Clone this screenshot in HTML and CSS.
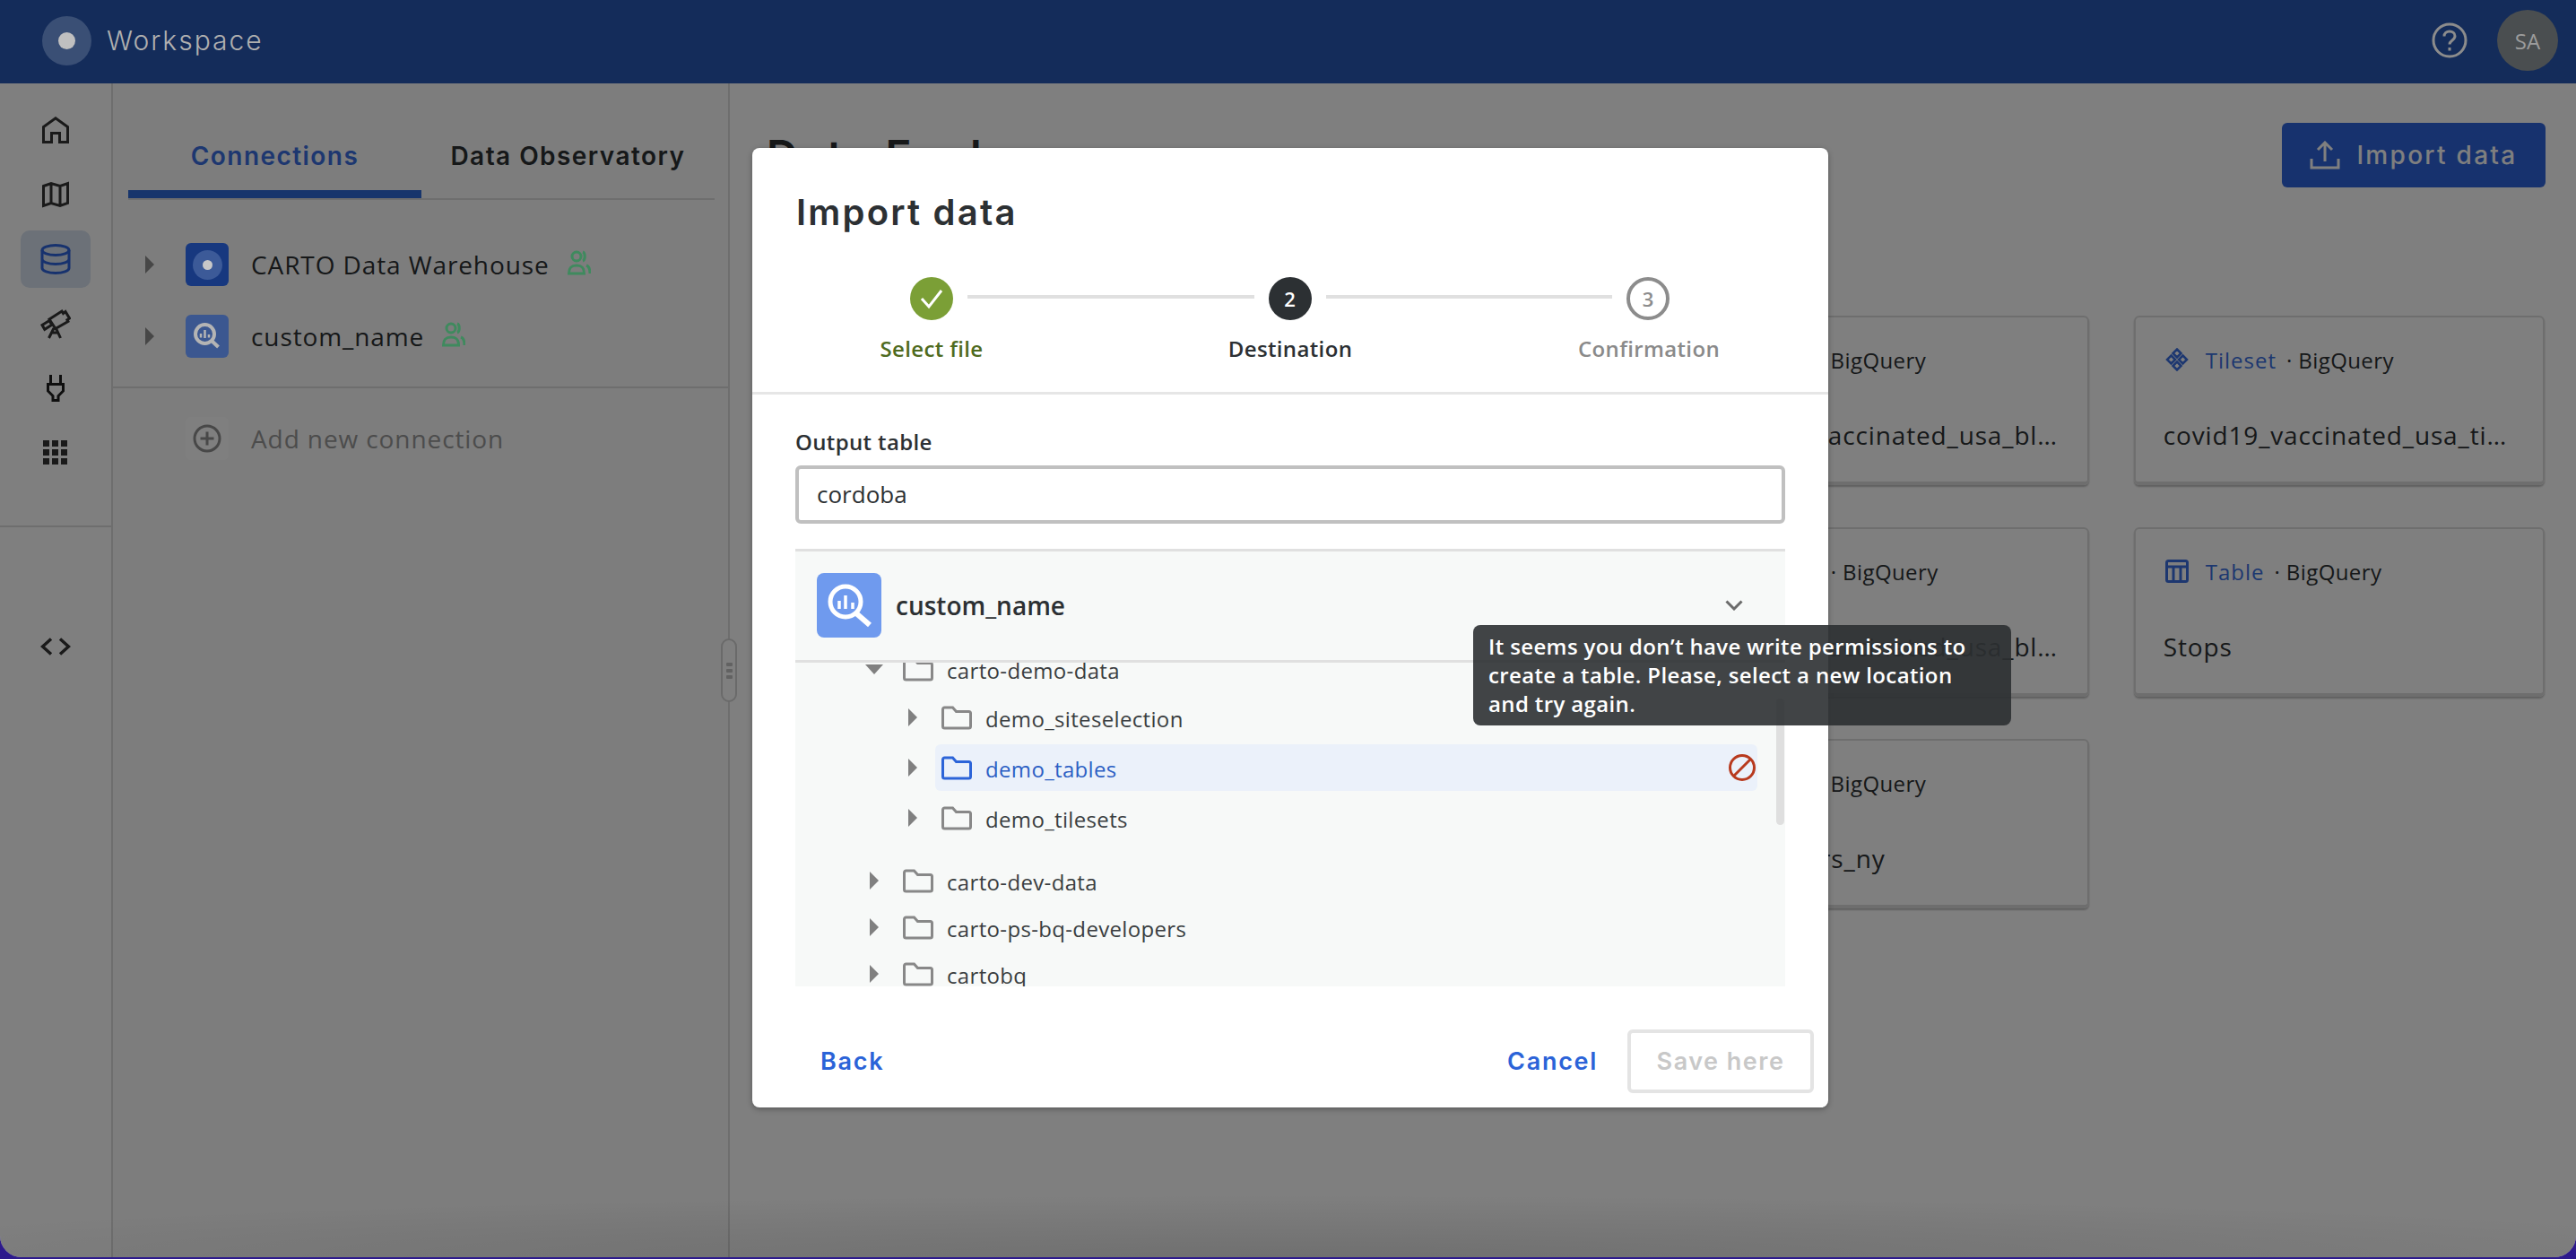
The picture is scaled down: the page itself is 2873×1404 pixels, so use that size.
FILE: index.html
```html
<!DOCTYPE html>
<html lang="en">
<head>
    <meta charset="UTF-8">
    <title>Workspace - Data Explorer</title>
    <link rel="stylesheet" href="styles.css">
</head>
<body>
<div class="app">

    <header class="topbar">
        <div class="logo"><span class="logo-dot"></span></div>
        <span class="brand">Workspace</span>
        <svg class="help" viewBox="0 0 40 40" fill="none" stroke="#8c8c8c" stroke-width="3">
            <circle cx="20" cy="20" r="18"/>
            <path d="M14 15.500c0-3.500 2.700-5.500 6-5.500s6 2 6 5.200c0 4.800-6 4.800-6 9.300"/>
            <path d="M20 28v3.500"/>
        </svg>
        <div class="avatar">SA</div>
    </header>

    <div class="workspace">
        <nav class="rail">
            <a class="rail-item">
                <svg width="30" height="30" viewBox="0 0 30 30" fill="none" stroke="#343434" stroke-width="3"><path d="M1.500 28.500V11.500L15 1.800l13.500 9.700v17h-9V18.500h-9v10z"/></svg>
            </a>
            <a class="rail-item">
                <svg width="30" height="30" viewBox="0 0 30 30" fill="none" stroke="#343434" stroke-width="3"><path d="M1.500 5.500 10 2.500l10 3 8.500-3v22l-8.500 3-10-3-8.500 3zM10 2.500v22M20 5.500v22"/></svg>
            </a>
            <a class="rail-item active">
                <svg width="34" height="34" viewBox="0 0 34 34" fill="none" stroke="#2e64dc" stroke-width="3"><ellipse cx="17" cy="7" rx="15" ry="5.500"/><path d="M2 7v20c0 3 6.700 5.500 15 5.500S32 30 32 27V7M2 17c0 3 6.700 5.500 15 5.500S32 20 32 17"/></svg>
            </a>
            <a class="rail-item">
                <svg width="34" height="34" viewBox="0 0 34 34" fill="none" stroke="#343434" stroke-width="3"><path d="m10 12 14-9 1.500 2.500 2.500-2 4.500 7.500-2.600 1.800 1 1.700-14 8zM2 18.500l8-5 2.800 4.800-8 5zM15 22l-5.500 11M17 21l5.500 12M12 27h8"/></svg>
            </a>
            <a class="rail-item">
                <svg width="20" height="30" viewBox="0 0 20 30" fill="none" stroke="#1e1e1e" stroke-width="3"><path d="M4.500 0v10M15.500 0v10M1.500 10.500h17V18l-5.500 5.500v5H7v-5L1.500 18z"/></svg>
            </a>
            <a class="rail-item">
                <svg width="28" height="28" viewBox="0 0 28 28" fill="#343434">
                    <rect x="0" y="0" width="7" height="7"/><rect x="10" y="0" width="7" height="7"/><rect x="20" y="0" width="7" height="7"/>
                    <rect x="0" y="10" width="7" height="7"/><rect x="10" y="10" width="7" height="7"/><rect x="20" y="10" width="7" height="7"/>
                    <rect x="0" y="20" width="7" height="7"/><rect x="10" y="20" width="7" height="7"/><rect x="20" y="20" width="7" height="7"/>
                </svg>
            </a>
            <div class="rail-divider"></div>
            <a class="rail-item">
                <svg width="34" height="20" viewBox="0 0 34 20" fill="none" stroke="#343434" stroke-width="3.500"><path d="M12 1.500 2.500 10l9.500 8.500M22 1.500l9.500 8.500-9.500 8.500"/></svg>
            </a>
        </nav>

        <aside class="sidebar">
            <div class="tabs">
                <div class="tab active">Connections</div>
                <div class="tab">Data Observatory</div>
            </div>

            <div class="connections">
                <div class="conn">
                    <span class="caret"></span>
                    <span class="conn-icon carto"><span class="carto-ring"><span class="carto-dot"></span></span></span>
                    <span class="conn-name">CARTO Data Warehouse</span>
                    <svg class="shared" viewBox="0 0 26 28" fill="none" stroke="#3f8a5e" stroke-width="3"><circle cx="10" cy="7" r="5"/><path d="M17 2c3 1 3 9 0 10M1.500 26c0-8 4-9 8.500-9s8.500 1 8.500 9zM21 17c3 1 4 4 4 9"/></svg>
                </div>
                <div class="conn">
                    <span class="caret"></span>
                    <span class="conn-icon bigquery">
                        <svg width="36" height="36" viewBox="0 0 72 72" fill="none" stroke="#b4b4b4"><circle cx="31" cy="31" r="21" stroke-width="8"/><path d="M46 46l15 14" stroke-width="8"/><path d="M22 30v9M31 22v18M40 32v7" stroke-width="5"/></svg>
                    </span>
                    <span class="conn-name">custom_name</span>
                    <svg class="shared" viewBox="0 0 26 28" fill="none" stroke="#3f8a5e" stroke-width="3"><circle cx="10" cy="7" r="5"/><path d="M17 2c3 1 3 9 0 10M1.500 26c0-8 4-9 8.500-9s8.500 1 8.500 9zM21 17c3 1 4 4 4 9"/></svg>
                </div>
            </div>

            <div class="add-conn">
                <span class="add-tile">
                    <svg width="32" height="32" viewBox="0 0 32 32" fill="none" stroke="#909090" stroke-width="3"><circle cx="16" cy="16" r="14"/><path d="M16 8.500v15M8.500 16h15"/></svg>
                </span>
                <span class="add-label">Add new connection</span>
            </div>

            <div class="handle"><span></span><span></span><span></span></div>
        </aside>

        <main class="main">
            <div class="main-head">
                <h1 class="page-title">Data Explorer</h1>
                <button class="import-btn">
                    <svg width="34" height="32" viewBox="0 0 34 32" fill="none" stroke="#fff" stroke-width="3"><path d="M17 23V3M9 10l8-8 8 8"/><path d="M2 20v10h30V20"/></svg>
                    Import data
                </button>
            </div>

            <div class="cards">
                <div class="card"></div>
                <div class="card"></div>
                <div class="card">
                    <div class="card-head">
                        <svg class="card-icon" viewBox="0 0 26 26" fill="none" stroke="#3a6fe0" stroke-width="3"><rect x="1.500" y="1.500" width="23" height="23" rx="2"/><path d="M1.500 8h23M9 8v16M17 8v16"/></svg>
                        <span class="card-type">Table</span><span class="card-source">· BigQuery</span>
                    </div>
                    <div class="card-name">covid19_vaccinated_usa_blockgroups</div>
                </div>
                <div class="card">
                    <div class="card-head">
                        <svg class="card-icon" viewBox="0 0 26 26" fill="none" stroke="#3a6fe0" stroke-width="2.500"><path d="M13 1.500l4.500 4.500-4.500 4.500L8.500 6zM6.500 8.500 11 13l-4.500 4.500L2 13zM19.500 8.500 24 13l-4.500 4.500L15 13zM13 15.500l4.500 4.500-4.500 4.500L8.500 20z"/></svg>
                        <span class="card-type">Tileset</span><span class="card-source">· BigQuery</span>
                    </div>
                    <div class="card-name">covid19_vaccinated_usa_ti…</div>
                </div>

                <div class="card"></div>
                <div class="card"></div>
                <div class="card">
                    <div class="card-head">
                        <svg class="card-icon" viewBox="0 0 26 26" fill="none" stroke="#3a6fe0" stroke-width="2.500"><path d="M13 1.500l4.500 4.500-4.500 4.500L8.500 6zM6.500 8.500 11 13l-4.500 4.500L2 13zM19.500 8.500 24 13l-4.500 4.500L15 13zM13 15.500l4.500 4.500-4.500 4.500L8.500 20z"/></svg>
                        <span class="card-type">Tileset</span><span class="card-source">· BigQuery</span>
                    </div>
                    <div class="card-name">covid19_vaccinated_usa_blockgroups</div>
                </div>
                <div class="card">
                    <div class="card-head">
                        <svg class="card-icon" viewBox="0 0 26 26" fill="none" stroke="#3a6fe0" stroke-width="3"><rect x="1.500" y="1.500" width="23" height="23" rx="2"/><path d="M1.500 8h23M9 8v16M17 8v16"/></svg>
                        <span class="card-type">Table</span><span class="card-source">· BigQuery</span>
                    </div>
                    <div class="card-name">Stops</div>
                </div>

                <div class="card"></div>
                <div class="card"></div>
                <div class="card">
                    <div class="card-head">
                        <svg class="card-icon" viewBox="0 0 26 26" fill="none" stroke="#3a6fe0" stroke-width="3"><rect x="1.500" y="1.500" width="23" height="23" rx="2"/><path d="M1.500 8h23M9 8v16M17 8v16"/></svg>
                        <span class="card-type">Table</span><span class="card-source">· BigQuery</span>
                    </div>
                    <div class="card-name">consumers_ny</div>
                </div>
            </div>
        </main>
    </div>

    <div class="scrim"></div>

    <section class="modal">
        <h2 class="modal-title">Import data</h2>

        <div class="steps">
            <span class="step-dot done">
                <svg width="28" height="24" viewBox="0 0 28 24" fill="none" stroke="#fff" stroke-width="3"><path d="M3 12l8 9L25 3"/></svg>
            </span>
            <span class="step-line"></span>
            <span class="step-dot current">2</span>
            <span class="step-line"></span>
            <span class="step-dot todo">3</span>
        </div>
        <div class="step-labels">
            <span class="label-done">Select file</span>
            <span class="label-current">Destination</span>
            <span class="label-todo">Confirmation</span>
        </div>

        <div class="modal-body">
            <label class="field-label" for="output">Output table</label>
            <input class="field-input" id="output" value="cordoba">

            <div class="picker">
                <div class="picker-head">
                    <span class="picker-icon">
                        <svg width="72" height="72" viewBox="0 0 72 72" fill="none" stroke="#fff"><circle cx="32" cy="32" r="17" stroke-width="5"/><path d="M44 45l15 13" stroke-width="6"/><path d="M25 31v9M32 25v15M40 33v7" stroke-width="3.500"/></svg>
                    </span>
                    <span class="picker-name">custom_name</span>
                    <svg class="chevron" width="20" height="12" viewBox="0 0 20 12" fill="none" stroke="#6b6b6b" stroke-width="3"><path d="M1.500 1.500 10 10l8.500-8.500"/></svg>
                </div>

                <div class="tree">
                    <div class="node root first">
                        <span class="arrow-down"></span>
                        <div class="item">
                            <svg class="folder" viewBox="0 0 34 27" fill="none" stroke="#888" stroke-width="3"><path d="M1.500 4a2 2 0 0 1 2-2h9l4 4.500h14a2 2 0 0 1 2 2V23a2 2 0 0 1-2 2h-27a2 2 0 0 1-2-2z"/></svg>
                            <span class="item-label">carto-demo-data</span>
                        </div>
                    </div>
                    <div class="node child">
                        <span class="arrow-right"></span>
                        <div class="item">
                            <svg class="folder" viewBox="0 0 34 27" fill="none" stroke="#888" stroke-width="3"><path d="M1.500 4a2 2 0 0 1 2-2h9l4 4.500h14a2 2 0 0 1 2 2V23a2 2 0 0 1-2 2h-27a2 2 0 0 1-2-2z"/></svg>
                            <span class="item-label">demo_siteselection</span>
                        </div>
                    </div>
                    <div class="node child">
                        <span class="arrow-right"></span>
                        <div class="item selected">
                            <svg class="folder" viewBox="0 0 34 27" fill="none" stroke="#2c64d8" stroke-width="3"><path d="M1.500 4a2 2 0 0 1 2-2h9l4 4.500h14a2 2 0 0 1 2 2V23a2 2 0 0 1-2 2h-27a2 2 0 0 1-2-2z"/></svg>
                            <span class="item-label">demo_tables</span>
                            <svg class="ban" width="30" height="30" viewBox="0 0 30 30" fill="none" stroke="#b83a1e" stroke-width="3"><circle cx="15" cy="15" r="13.500"/><path d="M24.500 5.500l-19 19"/></svg>
                        </div>
                    </div>
                    <div class="node child">
                        <span class="arrow-right"></span>
                        <div class="item">
                            <svg class="folder" viewBox="0 0 34 27" fill="none" stroke="#888" stroke-width="3"><path d="M1.500 4a2 2 0 0 1 2-2h9l4 4.500h14a2 2 0 0 1 2 2V23a2 2 0 0 1-2 2h-27a2 2 0 0 1-2-2z"/></svg>
                            <span class="item-label">demo_tilesets</span>
                        </div>
                    </div>
                    <div class="node root spaced">
                        <span class="arrow-right"></span>
                        <div class="item">
                            <svg class="folder" viewBox="0 0 34 27" fill="none" stroke="#888" stroke-width="3"><path d="M1.500 4a2 2 0 0 1 2-2h9l4 4.500h14a2 2 0 0 1 2 2V23a2 2 0 0 1-2 2h-27a2 2 0 0 1-2-2z"/></svg>
                            <span class="item-label">carto-dev-data</span>
                        </div>
                    </div>
                    <div class="node root">
                        <span class="arrow-right"></span>
                        <div class="item">
                            <svg class="folder" viewBox="0 0 34 27" fill="none" stroke="#888" stroke-width="3"><path d="M1.500 4a2 2 0 0 1 2-2h9l4 4.500h14a2 2 0 0 1 2 2V23a2 2 0 0 1-2 2h-27a2 2 0 0 1-2-2z"/></svg>
                            <span class="item-label">carto-ps-bq-developers</span>
                        </div>
                    </div>
                    <div class="node root">
                        <span class="arrow-right"></span>
                        <div class="item">
                            <svg class="folder" viewBox="0 0 34 27" fill="none" stroke="#888" stroke-width="3"><path d="M1.500 4a2 2 0 0 1 2-2h9l4 4.500h14a2 2 0 0 1 2 2V23a2 2 0 0 1-2 2h-27a2 2 0 0 1-2-2z"/></svg>
                            <span class="item-label">cartobq</span>
                        </div>
                    </div>
                    <div class="scroll-thumb"></div>
                </div>
            </div>
        </div>

        <footer class="modal-foot">
            <button class="text-btn">Back</button>
            <button class="text-btn cancel">Cancel</button>
            <button class="save-btn" disabled>Save here</button>
        </footer>
    </section>

    <div class="tooltip">It seems you don’t have write permissions to<br>create a table. Please, select a new location<br>and try again.</div>
</div>
</body>
</html>
```

FILE: styles.css
```css
* {
    margin: 0;
    padding: 0;
    box-sizing: border-box;
}

body {
    height: 100vh;
    overflow: hidden;
    background-color: #2d1a8c;
    font-family: 'Open Sans', sans-serif;
    color: #2c3033;
}

.app {
    position: relative;
    height: calc(100vh - 2px);
    display: flex;
    flex-direction: column;
    background-color: #fff;
    border-radius: 0 0 24px 24px;
    overflow: hidden;
}

/* Top bar sits above the scrim, its colours are the dimmed ones */
.topbar {
    position: relative;
    z-index: 2;
    flex: none;
    height: 93px;
    display: flex;
    align-items: center;
    padding: 0 20px 3px 47px;
    background-color: #142c5a;
}

.logo {
    width: 55px;
    height: 55px;
    border-radius: 50%;
    background-color: #3a4f75;
    display: flex;
    align-items: center;
    justify-content: center;
}

.logo-dot {
    width: 19px;
    height: 19px;
    border-radius: 50%;
    background-color: #c0c0c0;
}

.brand {
    margin-left: 17px;
    font-family: 'Inter', sans-serif;
    font-size: 30px;
    font-weight: 300;
    letter-spacing: 2px;
    color: #b0b0b0;
}

.help {
    width: 40px;
    height: 40px;
    margin-left: auto;
}

.avatar {
    width: 68px;
    height: 68px;
    margin-left: 33px;
    border-radius: 50%;
    background-color: #4a4e50;
    color: #9c9c9c;
    font-size: 24px;
    display: flex;
    align-items: center;
    justify-content: center;
}

.workspace {
    flex: 1;
    display: flex;
    min-height: 0;
}

/* Left rail */
.rail {
    flex: none;
    width: 126px;
    padding: 20px 23px 0;
    border-right: 2px solid #dcdcdc;
    display: flex;
    flex-direction: column;
    gap: 8px;
}

.rail-item {
    flex: none;
    width: 78px;
    height: 64px;
    border-radius: 10px;
    display: flex;
    align-items: center;
    justify-content: center;
}

.rail-item.active {
    background-color: #d8e2f0;
}

.rail-divider {
    flex: none;
    height: 2px;
    margin: 41px -23px 93px;
    background-color: #dcdcdc;
}

/* Connections panel */
.sidebar {
    position: relative;
    flex: none;
    width: 688px;
    border-right: 2px solid #dcdcdc;
    background-color: #fbfbfb;
}

.tabs {
    display: grid;
    grid-template-columns: 327px 327px;
    margin: 34px 0 0 17px;
    width: 654px;
    border-bottom: 2px solid #dcdcdc;
}

.tab {
    height: 94px;
    padding-top: 8px;
    border-bottom: 9px solid transparent;
    display: flex;
    align-items: center;
    justify-content: center;
    font-family: 'Inter', sans-serif;
    font-size: 28px;
    font-weight: 600;
    letter-spacing: 1.450px;
    color: #2c3033;
}

.tab.active {
    color: #3a6fe0;
    border-bottom-color: #2e6ad8;
}

.connections {
    padding: 48px 0 32px;
    display: flex;
    flex-direction: column;
    gap: 32px;
    border-bottom: 2px solid #dcdcdc;
}

.conn {
    height: 48px;
    padding-left: 36px;
    display: flex;
    align-items: center;
}

.caret {
    width: 0;
    height: 0;
    border-left: 10px solid #8f8f8f;
    border-top: 10px solid transparent;
    border-bottom: 10px solid transparent;
}

.conn-icon {
    position: relative;
    z-index: 2;
    width: 48px;
    height: 48px;
    margin-left: 35px;
    border-radius: 6px;
    display: flex;
    align-items: center;
    justify-content: center;
}

.conn-icon.carto {
    background-color: #17387f;
}

.conn-icon.bigquery {
    background-color: #3b5790;
}

.carto-ring {
    width: 33px;
    height: 33px;
    border-radius: 50%;
    background-color: #3c5a98;
    display: flex;
    align-items: center;
    justify-content: center;
}

.carto-dot {
    width: 11px;
    height: 11px;
    border-radius: 50%;
    background-color: #c8c8c8;
}

.conn-name {
    margin-left: 25px;
    font-size: 28px;
    letter-spacing: 0.900px;
}

.shared {
    position: relative;
    z-index: 2;
    width: 26px;
    height: 28px;
    margin: -5px 0 0 20px;
}

.add-conn {
    margin-top: 32px;
    padding-left: 81px;
    display: flex;
    align-items: center;
}

.add-tile {
    width: 48px;
    height: 48px;
    border-radius: 6px;
    background-color: #fff;
    display: flex;
    align-items: center;
    justify-content: center;
}

.add-label {
    margin-left: 25px;
    font-size: 28px;
    letter-spacing: 0.900px;
    color: #999;
}

.handle {
    position: absolute;
    top: 619px;
    right: -10px;
    width: 18px;
    height: 71px;
    border: 2px solid #d4d4d4;
    border-radius: 9px;
    background-color: #fff;
    display: flex;
    flex-direction: column;
    align-items: center;
    justify-content: center;
    gap: 3px;
}

.handle span {
    width: 7px;
    height: 4px;
    border-radius: 1px;
    background-color: #c4c4c4;
}

/* Main area, mostly under the modal */
.main {
    flex: 1;
    min-width: 0;
    padding: 44px 34px 0 41px;
}

.main-head {
    display: flex;
    align-items: center;
    justify-content: space-between;
}

.page-title {
    font-family: 'Inter', sans-serif;
    font-size: 48px;
    font-weight: 600;
    letter-spacing: 2.700px;
    color: #2c3033;
}

.import-btn {
    width: 294px;
    height: 72px;
    border: none;
    border-radius: 6px;
    background-color: #2e64dc;
    color: #fff;
    font-family: 'Inter', sans-serif;
    font-size: 28px;
    font-weight: 500;
    letter-spacing: 2.300px;
    display: flex;
    align-items: center;
    justify-content: center;
    gap: 18px;
}

.cards {
    margin-top: 143px;
    margin-right: 1px;
    display: grid;
    grid-template-columns: repeat(4, 1fr);
    grid-auto-rows: 189px;
    gap: 47px 50px;
}

.card {
    min-width: 0;
    padding: 29px 31px 0;
    border: 2px solid #dcdcdc;
    border-bottom-width: 4px;
    border-radius: 6px;
    box-shadow: 0 2px 2px rgba(0, 0, 0, 0.25);
}

.card-head {
    height: 36px;
    display: flex;
    align-items: center;
    font-size: 24px;
    color: #2c3033;
}

.card-icon {
    flex: none;
    width: 26px;
    height: 26px;
    margin: 0 19px 0 2px;
}

.card-type {
    letter-spacing: 1px;
    color: #3a6fe0;
}

.card-source {
    margin-left: 11px;
    letter-spacing: 0.400px;
}

.card-name {
    margin-top: 48px;
    height: 36px;
    line-height: 36px;
    font-size: 28px;
    letter-spacing: 0.850px;
    white-space: nowrap;
    overflow: hidden;
    text-overflow: ellipsis;
}

.scrim {
    position: absolute;
    z-index: 1;
    top: 93px;
    left: 0;
    right: 0;
    bottom: 0;
    background:
        radial-gradient(ellipse 60% 70px at 50% 100%, rgba(0, 0, 0, 0.12), transparent),
        rgba(0, 0, 0, 0.5);
}

/* Import dialog */
.modal {
    position: absolute;
    z-index: 3;
    left: 839px;
    top: 165px;
    width: 1200px;
    height: 1070px;
    border-radius: 8px;
    background-color: #fff;
    box-shadow: 0 2px 6px rgba(0, 0, 0, 0.3);
    display: flex;
    flex-direction: column;
}

.modal-title {
    margin: 47px 0 0 49px;
    font-family: 'Inter', sans-serif;
    font-size: 40px;
    line-height: 50px;
    font-weight: 600;
    letter-spacing: 2.200px;
    color: #2c3033;
}

.steps {
    margin-top: 47px;
    padding: 0 177px 0 176px;
    display: flex;
    align-items: center;
    gap: 16px;
}

.step-dot {
    flex: none;
    width: 48px;
    height: 48px;
    border-radius: 50%;
    display: flex;
    align-items: center;
    justify-content: center;
    font-size: 22px;
    font-weight: 600;
}

.step-dot.done {
    background-color: #7b9f36;
}

.step-dot.current {
    background-color: #2c3033;
    color: #fff;
}

.step-dot.todo {
    border: 4px solid #8c8c8c;
    color: #8c8c8c;
}

.step-line {
    flex: 1;
    height: 4px;
    margin-bottom: 4px;
    background-color: #e0e0e0;
}

.step-labels {
    margin-top: 15px;
    padding-bottom: 31px;
    border-bottom: 3px solid #e6e6e6;
    display: grid;
    grid-template-columns: repeat(3, 1fr);
    text-align: center;
    font-size: 24px;
    line-height: 34px;
    font-weight: 600;
    letter-spacing: 0.360px;
}

.label-done { color: #4f6b1f; }
.label-current { color: #2c3033; }
.label-todo { color: #8a8a8a; }

.modal-body {
    padding: 37px 48px 0;
}

.field-label {
    display: block;
    font-size: 24px;
    line-height: 32px;
    font-weight: 600;
    letter-spacing: 0.360px;
    color: #2c3033;
}

.field-input {
    display: block;
    width: 100%;
    height: 65px;
    margin-top: 10px;
    padding: 0 20px 2px;
    border: 4px solid #c0c0c0;
    border-radius: 6px;
    outline: none;
    font-family: 'Open Sans', sans-serif;
    font-size: 26px;
    color: #2c3033;
}

.picker {
    margin-top: 28px;
    height: 488px;
    border-top: 3px solid #e0e0e0;
    background-color: #f7f9f8;
    display: flex;
    flex-direction: column;
}

.picker-head {
    flex: none;
    height: 124px;
    padding: 0 47px 1px 24px;
    border-bottom: 3px solid #e0e0e0;
    display: flex;
    align-items: center;
}

.picker-icon {
    width: 72px;
    height: 72px;
    border-radius: 8px;
    background-color: #6f9aee;
}

.picker-name {
    margin-left: 16px;
    font-size: 28px;
    font-weight: 600;
    color: #2c3033;
}

.chevron {
    margin-left: auto;
}

.tree {
    position: relative;
    flex: 1;
    min-height: 0;
    overflow: hidden;
}

.node {
    height: 52px;
    margin-right: 31px;
    display: flex;
    align-items: center;
    gap: 18px;
}

.node.root {
    padding-left: 81px;
}

.node.child {
    padding-left: 124px;
    margin-top: 4px;
}

.node.first {
    margin-top: -19px;
    margin-bottom: -2px;
}

.node.spaced {
    margin-top: 18px;
}

.arrow-right,
.arrow-down {
    flex: none;
    width: 14px;
    height: 0;
    display: flex;
    align-items: center;
    justify-content: center;
}

.arrow-right::before {
    content: "";
    border-left: 10px solid #808080;
    border-top: 10px solid transparent;
    border-bottom: 10px solid transparent;
}

.arrow-down::before {
    content: "";
    border-top: 11px solid #808080;
    border-left: 10px solid transparent;
    border-right: 10px solid transparent;
}

.item {
    flex: 1;
    align-self: stretch;
    padding: 0 2px 0 7px;
    border-radius: 6px;
    display: flex;
    align-items: center;
}

.item.selected {
    background-color: #ebf1fa;
}

.folder {
    flex: none;
    width: 34px;
    height: 27px;
}

.item-label {
    margin-left: 15px;
    padding-top: 3px;
    font-size: 24px;
    letter-spacing: 0.340px;
    color: #3a3e41;
}

.selected .item-label {
    color: #2c5fc4;
}

.ban {
    margin-left: auto;
}

.scroll-thumb {
    position: absolute;
    top: 40px;
    right: 1px;
    width: 9px;
    height: 141px;
    border-radius: 5px;
    background-color: #dfdfdf;
}

.modal-foot {
    margin-top: 48px;
    padding: 0 16px 0 60px;
    display: flex;
    align-items: center;
}

.text-btn {
    padding: 0 16px;
    border: none;
    background: none;
    font-family: 'Inter', sans-serif;
    font-size: 27px;
    font-weight: 600;
    letter-spacing: 1.700px;
    color: #2b63d8;
}

.cancel {
    margin-left: auto;
    margin-right: 17px;
}

.save-btn {
    width: 208px;
    height: 71px;
    border: 4px solid #e4e4e4;
    border-radius: 6px;
    background: #fff;
    font-family: 'Inter', sans-serif;
    font-size: 27px;
    font-weight: 600;
    letter-spacing: 1.500px;
    color: #c8c8c8;
}

.tooltip {
    position: absolute;
    z-index: 4;
    left: 1643px;
    top: 697px;
    width: 600px;
    height: 112px;
    padding: 8px 17px;
    border-radius: 8px;
    background-color: rgba(44, 48, 50, 0.9);
    color: #fff;
    font-size: 24px;
    line-height: 32px;
    font-weight: 600;
    letter-spacing: 0.370px;
}
```
